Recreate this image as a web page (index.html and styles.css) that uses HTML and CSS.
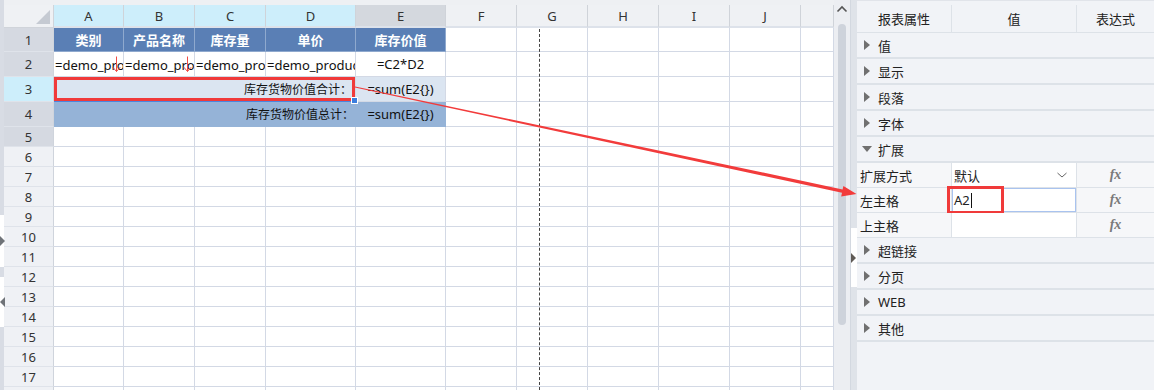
FILE: index.html
```html
<!DOCTYPE html>
<html lang="zh-CN">
<head>
  <meta charset="UTF-8">
  <title>报表设计 - 扩展属性</title>
  <link rel="stylesheet" href="styles.css">
</head>
<body>
  <div class="app">
    <div class="edge">
      <div class="seg g1"></div>
      <div class="seg w1"><span class="tri-r"></span></div>
      <div class="seg g2"></div>
      <div class="seg w2"><span class="tri-l"></span></div>
      <div class="seg g3"></div>
    </div>

    <div class="sheet">
      <div class="grid" id="grid">
        <div class="cell corner"><span class="corner-tri"></span></div>
        <div class="cell ch sel">A</div>
        <div class="cell ch sel">B</div>
        <div class="cell ch sel">C</div>
        <div class="cell ch sel">D</div>
        <div class="cell ch used">E</div>
        <div class="cell ch">F</div>
        <div class="cell ch">G</div>
        <div class="cell ch">H</div>
        <div class="cell ch">I</div>
        <div class="cell ch">J</div>
        <div class="cell ch"></div>

        <div class="cell rh used">1</div>
        <div class="cell title">类别</div>
        <div class="cell title">产品名称</div>
        <div class="cell title">库存量</div>
        <div class="cell title">单价</div>
        <div class="cell title">库存价值</div>
        <div class="cell"></div><div class="cell"></div><div class="cell"></div><div class="cell"></div><div class="cell"></div><div class="cell"></div>

        <div class="cell rh used">2</div>
        <div class="cell left"><span class="clip">=demo_product.类别</span><svg class="down" width="9" height="17" viewBox="0 0 9 17"><path d="M4.5 0.5V15.5M0.8 11.2L4.5 15.5L8.2 11.2" fill="none" stroke="#f04a44" stroke-width="1"/></svg></div>
        <div class="cell left"><span class="clip">=demo_product.产品名称</span><svg class="down" width="9" height="17" viewBox="0 0 9 17"><path d="M4.5 0.5V15.5M0.8 11.2L4.5 15.5L8.2 11.2" fill="none" stroke="#f04a44" stroke-width="1"/></svg></div>
        <div class="cell left"><span class="clip">=demo_product.库存量</span></div>
        <div class="cell left"><span class="clip">=demo_product.单价</span></div>
        <div class="cell center">=C2*D2</div>
        <div class="cell"></div><div class="cell"></div><div class="cell"></div><div class="cell"></div><div class="cell"></div><div class="cell"></div>

        <div class="cell rh sel">3</div>
        <div class="cell sum right merged"><span class="cn">库存货物价值合计：</span><span class="handle"></span></div>
        <div class="cell sum center">=sum(E2{})</div>
        <div class="cell"></div><div class="cell"></div><div class="cell"></div><div class="cell"></div><div class="cell"></div><div class="cell"></div>

        <div class="cell rh used">4</div>
        <div class="cell total right span4"><span class="cn">库存货物价值总计：</span></div>
        <div class="cell total center">=sum(E2{})</div>
        <div class="cell"></div><div class="cell"></div><div class="cell"></div><div class="cell"></div><div class="cell"></div><div class="cell"></div>
      </div>
      <div class="page-break"></div>
    </div>

    <div class="vscroll">
      <svg class="up" width="14" height="10" viewBox="0 0 14 10"><path d="M2.5 7.5L7 3L11.5 7.5" fill="none" stroke="#555" stroke-width="1.6"/></svg>
      <div class="thumb"></div>
    </div>

    <div class="splitter">
      <div class="grip"><span class="tri-r dark"></span></div>
    </div>

    <div class="panel">
      <div class="phead">
        <div class="pcol c1">报表属性</div>
        <div class="pcol c2">值</div>
        <div class="pcol c3">表达式</div>
      </div>
      <div class="group"><span class="arrow"></span>值</div>
      <div class="group"><span class="arrow"></span>显示</div>
      <div class="group"><span class="arrow"></span>段落</div>
      <div class="group"><span class="arrow"></span>字体</div>
      <div class="group open"><span class="arrow"></span>扩展</div>
      <div class="prop">
        <div class="pcol c1">扩展方式</div>
        <div class="pcol c2 value">默认<svg class="chev" width="12" height="8" viewBox="0 0 12 8"><path d="M1.5 2L6 6L10.5 2" fill="none" stroke="#666" stroke-width="1"/></svg></div>
        <div class="pcol c3 fx">fx</div>
      </div>
      <div class="prop">
        <div class="pcol c1">左主格</div>
        <div class="pcol c2 value editing">A2<span class="caret"></span><span class="mark"></span></div>
        <div class="pcol c3 fx">fx</div>
      </div>
      <div class="prop">
        <div class="pcol c1">上主格</div>
        <div class="pcol c2 value"></div>
        <div class="pcol c3 fx">fx</div>
      </div>
      <div class="group"><span class="arrow"></span>超链接</div>
      <div class="group"><span class="arrow"></span>分页</div>
      <div class="group"><span class="arrow"></span>WEB</div>
      <div class="group"><span class="arrow"></span>其他</div>
    </div>

    <svg class="link-arrow" width="1154" height="390" viewBox="0 0 1154 390">
      <polygon points="355.1,86.4 842.6,189.4 843.4,185.9 856.5,194 841.2,196.4 842,192.8 354.9,87.6" fill="#f23b3b"/>
    </svg>
  </div>

  <script>
    // empty rows below the report body
    const grid = document.getElementById("grid");
    for (let r = 5; r <= 18; r++) {
      const head = document.createElement("div");
      head.className = r === 5 ? "cell rh used" : "cell rh";
      head.textContent = r;
      grid.appendChild(head);
      for (let c = 0; c < 11; c++) {
        const cell = document.createElement("div");
        cell.className = "cell";
        grid.appendChild(cell);
      }
    }
  </script>
</body>
</html>
```

FILE: styles.css
```css
body {
  margin: 0;
  font-family: "Noto Sans", "Noto Sans CJK SC", sans-serif;
  font-size: 13px;
  color: #222;
  background: #eef0f3;
  overflow: hidden;
}
.app {
  position: relative;
  display: flex;
  width: 1154px;
  height: 390px;
  overflow: hidden;
}

/* left edge strip */
.edge {
  width: 4px;
  display: flex;
  flex-direction: column;
  z-index: 3;
}
.seg { position: relative; }
.g1 { height: 215px; background: #d8dce4; }
.w1 { height: 52px; background: #fff; }
.g2 { height: 10px; background: #d8dce4; }
.w2 { height: 50px; background: #fff; }
.g3 { flex: 1; background: #d8dce4; }
.tri-r, .tri-l {
  position: absolute;
  top: 50%;
  margin-top: -5px;
  width: 0;
  height: 0;
  border-top: 5px solid transparent;
  border-bottom: 5px solid transparent;
}
.tri-r { left: 0; border-left: 5px solid #6f7378; }
.tri-l { left: 0; border-right: 5px solid #6f7378; }

/* sheet */
.sheet {
  position: relative;
  width: 830px;
  padding-top: 5px;
  background: #eef0f3;
}
.grid {
  display: grid;
  grid-template-columns: 50px 70px 71px 71px 90px 90px 71px 71px 71px 71px 71px 33px;
  grid-template-rows: 23px 24px 25px 25px 25px;
  grid-auto-rows: 20px;
}
.cell {
  box-sizing: border-box;
  position: relative;
  display: flex;
  align-items: center;
  border-right: 1px solid #d3d9e5;
  border-bottom: 1px solid #d3d9e5;
  background: #fff;
  overflow: hidden;
  white-space: nowrap;
  color: #111;
}
.corner {
  background: #eff1f4;
  border-color: #d0d4da;
}
.corner-tri {
  position: absolute;
  right: 3px;
  bottom: 3px;
  width: 0;
  height: 0;
  border-left: 14px solid transparent;
  border-bottom: 14px solid #c5cad2;
}
.ch {
  justify-content: center;
  background: #eff1f4;
  border-right-color: #cfd3d9;
  border-bottom: 2px solid #dde2ea;
  color: #333;
}
.ch.sel { background: #cdeefb; }
.ch.used { background: #d4d8de; }
.rh {
  justify-content: center;
  background: #eff1f5;
  border-right-color: #cfd4dc;
  border-bottom-color: #dfe3ea;
  color: #333;
}
.rh.used { background: #d5d9e1; }
.rh.sel { background: #cdeefb; }
.title {
  justify-content: center;
  background: #5a7fb5;
  border-color: #8fa9ce;
  color: #fff;
  font-weight: bold;
}
.left { padding-left: 1px; }
.clip {
  display: block;
  width: 100%;
  overflow: hidden;
}
.down {
  position: absolute;
  right: 2px;
  top: 4px;
}
.center { justify-content: center; }
.right { justify-content: flex-end; padding-right: 1px; }
.cn { font-size: 12px; }
.sum { background: #dbe5f1; }
.total { background: #95b3d7; border-color: #95b3d7; }
.merged, .span4 { grid-column: span 4; }
.merged {
  overflow: visible;
  z-index: 2;
  box-shadow: inset 0 0 0 3px #f03a3a;
  border-bottom-color: #4a86e0;
  padding-right: 3px;
}
.handle {
  position: absolute;
  right: -3px;
  bottom: -3px;
  width: 5px;
  height: 5px;
  background: #3b7ddd;
  border: 1px solid #fff;
}
.page-break {
  position: absolute;
  left: 535px;
  top: 29px;
  bottom: 0;
  border-left: 1px dashed #444;
}

/* vertical scroll bar */
.vscroll {
  width: 16px;
  background: #eceef2;
  position: relative;
}
.up {
  display: block;
  margin: 4px 0 0 1px;
}
.thumb {
  margin: 10px 0 0 4px;
  width: 8px;
  height: 301px;
  border-radius: 4px;
  background: #ced3db;
}
.splitter {
  position: relative;
  width: 6px;
  background: #dfe3e9;
  border-left: 1px solid #d3d8e0;
}
.grip {
  position: absolute;
  top: 228px;
  left: 0;
  width: 6px;
  height: 59px;
  background: #fff;
}
.tri-r.dark { border-left-color: #5f5a55; }

/* property panel */
.panel {
  width: 297px;
  padding-top: 4px;
  background: #f1f3f7;
  border-top: 1px solid #e1e4ea;
  box-sizing: border-box;
}
.phead, .prop {
  display: flex;
}
.phead {
  height: 28px;
  border-bottom: 1px solid #dde2e8;
  box-sizing: border-box;
}
.pcol {
  box-sizing: border-box;
  display: flex;
  align-items: center;
  border-right: 1px solid #dde2e8;
  position: relative;
}
.c1 { width: 95px; }
.c2 { width: 125px; }
.c3 { width: 77px; border-right: none; }
.phead .pcol { justify-content: center; }
.group {
  display: flex;
  align-items: center;
  height: 26px;
  box-sizing: border-box;
  border-bottom: 2px solid #dde2e8;
  padding-left: 7px;
}
.arrow {
  width: 0;
  height: 0;
  margin-right: 8px;
  border-top: 5px solid transparent;
  border-bottom: 5px solid transparent;
  border-left: 6px solid #707070;
}
.group.open { padding-left: 5px; }
.group.open .arrow {
  margin-right: 6px;
  border-left: 5px solid transparent;
  border-right: 5px solid transparent;
  border-top: 6px solid #707070;
  border-bottom: none;
}
.prop {
  height: 25px;
  border-bottom: 1px solid #dde2e8;
  box-sizing: border-box;
}
.prop .c1 {
  padding-left: 3px;
  background: #f6f7f9;
}
.value {
  padding-left: 2px;
  background: #fff;
}
.chev {
  position: absolute;
  right: 8px;
  top: 8px;
}
.fx {
  justify-content: center;
  background: #f6f7f9;
  font-family: "Liberation Serif", serif;
  font-style: italic;
  font-weight: bold;
  font-size: 14px;
  color: #7a7a7a;
}
.editing {
  box-shadow: inset 0 0 0 1px #a9c3ef;
}
.caret {
  width: 1px;
  height: 15px;
  background: #111;
  margin-left: 1px;
}
.mark {
  position: absolute;
  left: -5px;
  top: -2px;
  width: 57px;
  height: 28px;
  box-sizing: border-box;
  border: 3px solid #f03a3a;
}
.link-arrow {
  position: absolute;
  left: 0;
  top: 0;
  pointer-events: none;
  z-index: 5;
}
```
